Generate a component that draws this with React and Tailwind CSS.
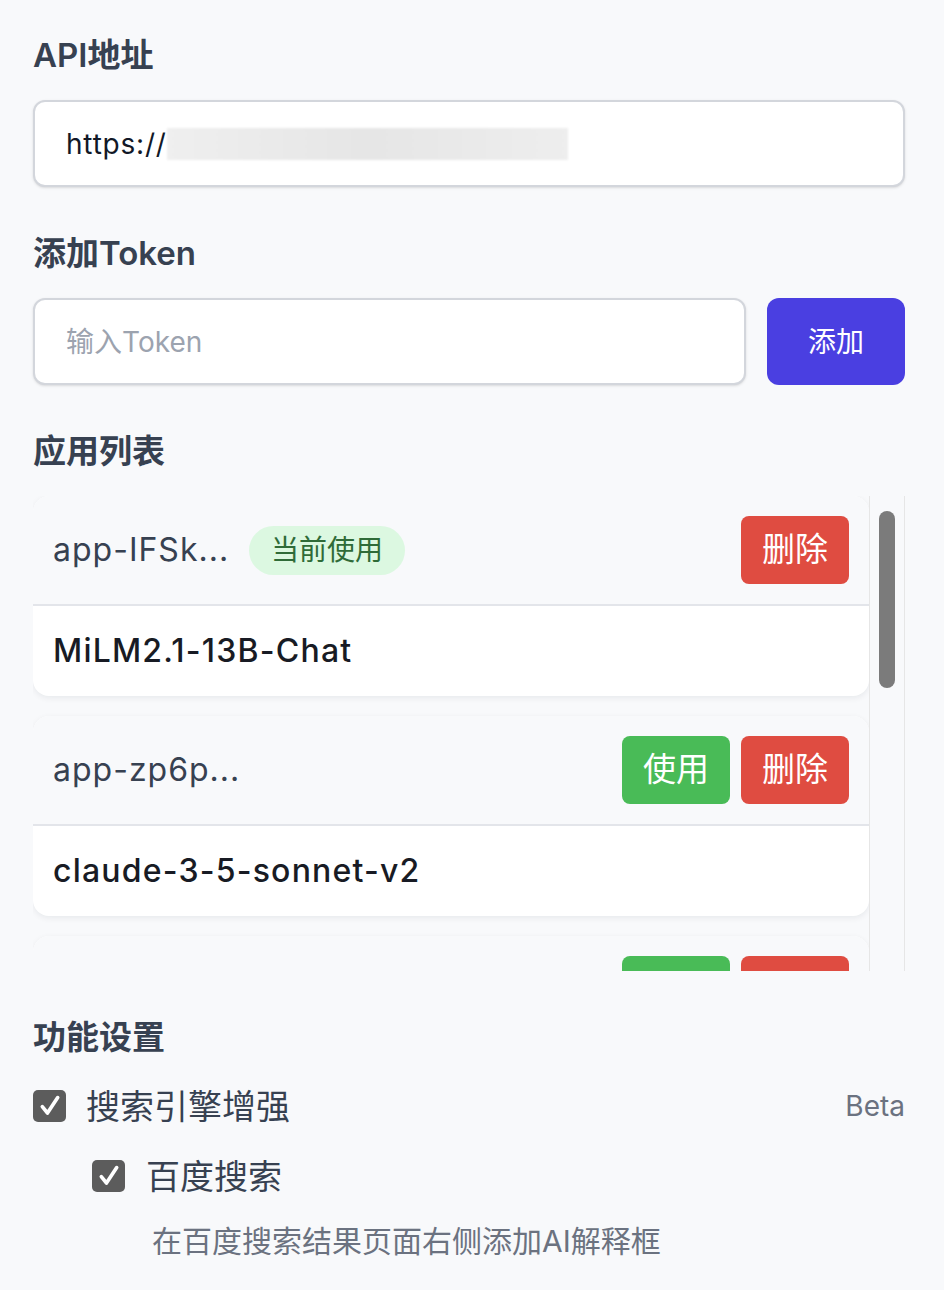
import React from "react";

const FONT = { fontFamily: 'Inter, "Noto Sans CJK SC", "Noto Sans", sans-serif' };

const apps = [
  { key: "app-IFSk...", model: "MiLM2.1-13B-Chat", current: true },
  { key: "app-zp6p...", model: "claude-3-5-sonnet-v2", current: false },
  { key: "app-x9Qa...", model: "gpt-4o-mini", current: false },
];

function Checkbox() {
  return (
    <span className="flex h-[32px] w-[33px] shrink-0 items-center justify-center rounded-[5px] bg-[#5c5c5c]">
      <svg viewBox="0 0 20 20" className="h-[28px] w-[28px]" fill="none">
        <path d="M4.5 10.5 L8.2 15 L15.5 4" stroke="white" strokeWidth="2.6" strokeLinecap="round" strokeLinejoin="round" />
      </svg>
    </span>
  );
}

function AppCard({ app }) {
  return (
    <div className="shrink-0 overflow-hidden rounded-2xl bg-white shadow-[0_2px_6px_rgba(15,23,42,0.07)]">
      <div className="flex h-[110px] items-center justify-between border-b-2 border-[#e3e5ea] bg-[#f8f9fb] px-[20px]">
        <div className="flex items-center gap-[20px]">
          <span className="text-[32px] tracking-[1px] text-[#374151]">{app.key}</span>
          {app.current && (
            <span className="flex h-[49px] items-center rounded-full bg-[#dcf8e1] px-[22px] text-[28px] text-[#2f6b38]">
              当前使用
            </span>
          )}
        </div>
        <div className="flex gap-[11px]">
          {!app.current && (
            <button type="button" className="flex h-[68px] w-[108px] items-center justify-center rounded-[8px] bg-[#49bb57] text-[33px] text-white">
              使用
            </button>
          )}
          <button type="button" className="flex h-[68px] w-[108px] items-center justify-center rounded-[8px] bg-[#df4c41] text-[33px] text-white">
            删除
          </button>
        </div>
      </div>
      <div className="flex h-[90px] items-center px-[20px] text-[32px] font-medium tracking-[1.2px] text-[#181b24]">
        {app.model}
      </div>
    </div>
  );
}

export default function App() {
  return (
    <div style={FONT} className="min-h-[1290px] w-[944px] bg-[#f8f9fb] pl-[33px] pr-[39px] pt-[34px]">
      {/* API地址 */}
      <h2 className="text-[33px] font-semibold leading-[42px] text-[#374151]">API地址</h2>
      <div className="mt-[24px] flex h-[87px] items-center rounded-[12px] border-2 border-[#d3d6dc] bg-white px-[31px] shadow-sm">
        <span className="text-[28px] tracking-[0.8px] text-[#111827]">https://</span>
        <span className="h-[32px] w-[401px] bg-gradient-to-r from-[#efefef] via-[#e6e6e6] to-[#eeeeee] blur-[1px]" />
      </div>

      {/* 添加Token */}
      <h2 className="mt-[45px] text-[33px] font-semibold leading-[42px] text-[#374151]">添加Token</h2>
      <div className="mt-[24px] flex gap-[21px]">
        <div className="flex h-[87px] flex-1 items-center rounded-[12px] border-2 border-[#d3d6dc] bg-white px-[31px] shadow-sm">
          <span className="text-[28px] text-[#9ca3af]">输入Token</span>
        </div>
        <button type="button" className="flex h-[87px] w-[138px] items-center justify-center rounded-[12px] bg-[#4a3fe1] text-[28px] text-white">
          添加
        </button>
      </div>

      {/* 应用列表 */}
      <h2 className="mt-[45px] text-[33px] font-semibold leading-[42px] text-[#374151]">应用列表</h2>
      <div className="mt-[24px] flex h-[475px]">
        <div className="flex flex-1 flex-col gap-[20px] overflow-hidden">
          {apps.map((app) => (
            <AppCard key={app.key} app={app} />
          ))}
        </div>
        <div className="w-[36px] border-l border-r border-[#e6e6e6] pt-[15px]">
          <div className="mx-auto h-[177px] w-[16px] rounded-full bg-[#7b7b7b]" />
        </div>
      </div>

      {/* 功能设置 */}
      <h2 className="mt-[45px] text-[33px] font-semibold leading-[42px] text-[#374151]">功能设置</h2>
      <div className="mt-[28px] flex h-[40px] items-center">
        <Checkbox />
        <span className="ml-[20px] text-[34px] text-[#374151]">搜索引擎增强</span>
        <span className="ml-auto text-[28px] text-[#6b7280]">Beta</span>
      </div>
      <div className="mt-[30px] flex h-[40px] items-center pl-[59px]">
        <Checkbox />
        <span className="ml-[21px] text-[34px] text-[#374151]">百度搜索</span>
      </div>
      <p className="mt-[27px] pl-[119px] text-[30px] leading-[36px] text-[#6b7280]">在百度搜索结果页面右侧添加AI解释框</p>
    </div>
  );
}
